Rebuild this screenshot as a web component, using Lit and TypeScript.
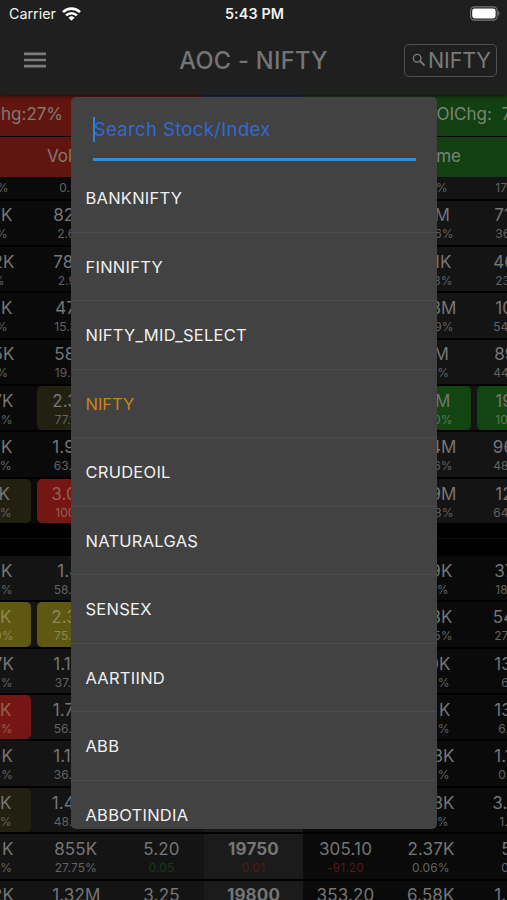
import { LitElement, html, css, svg } from "lit";
import { customElement, property } from "lit/decorators.js";
import { classMap } from "lit/directives/class-map.js";
import { styleMap } from "lit/directives/style-map.js";

type Tone = "" | "olive" | "yellow" | "red" | "green";

/** One edge cell: main text, its x, sub text, its x, and an optional highlight. */
type Edge = [string, number, string, number, Tone?];

interface Row {
  clip?: boolean;
  left: Edge;
  vol: Edge;
  mid?: { call: string; callChg: string; strike: string; strikeChg: string; put: string; putChg: string };
  putVol: Edge;
  right: Edge;
}

const UPPER: Row[] = [
  { clip: true, left: ["", 0, "%", 8], vol: ["", 0, "0.9%", 60], putVol: ["", 0, "%", 447], right: ["", 0, "17", 496] },
  { left: ["K", 12, "%", 7], vol: ["82K", 54, "2.6%", 58], putVol: ["M", 449.5, "6%", 453], right: ["71K", 495, "36", 496] },
  { left: ["2K", 14, "%", 4], vol: ["78K", 54, "2.9%", 58.5], putVol: ["1K", 451, "3%", 452], right: ["46K", 494, "23", 496] },
  { left: ["K", 12, "%", 7], vol: ["47K", 56, "15.3%", 55], putVol: ["3M", 456, "9%", 453], right: ["10M", 496, "54", 494] },
  { left: ["5K", 14, "%", 7.5], vol: ["58K", 55, "19.2%", 55.5], putVol: ["M", 448.5, "%", 448.5], right: ["89K", 495, "44", 494] },
  { left: ["7K", 13, "%", 12], vol: ["2.3M", 53, "77.1%", 55.5, "olive"], putVol: ["M", 450, "0%", 452, "green"], right: ["19M", 496, "10", 496, "green"] },
  { left: ["K", 12, "%", 11], vol: ["1.9M", 53, "63.4%", 54.5], putVol: ["4M", 456, "6%", 452], right: ["96K", 493.5, "48", 494] },
  { left: ["K", 9.5, "%", 11, "olive"], vol: ["3.0M", 52, "100%", 56, "red"], putVol: ["9M", 456, "8%", 453], right: ["12M", 496, "64", 494] },
];

const LOWER: Row[] = [
  { left: ["K", 12, "%", 12], vol: ["1.4M", 58, "58.3%", 54.5], putVol: ["9K", 452, "%", 448], right: ["37K", 495, "18", 496] },
  { left: ["K", 11, "9%", 13, "yellow"], vol: ["2.3M", 52, "75.6%", 55, "yellow"], putVol: ["3K", 452, "5%", 452], right: ["54K", 493.5, "27", 495] },
  { left: ["7K", 13.5, "%", 12], vol: ["1.1M", 54, "37.2%", 55.5], putVol: ["0K", 450, "%", 449], right: ["13K", 495, "6", 502] },
  { left: ["K", 11, "%", 12, "red"], vol: ["1.7M", 53.5, "56.4%", 54.5], putVol: ["K", 450, "%", 449], right: ["13K", 495, "6.", 499] },
  { left: ["K", 12.5, "4%", 12.5], vol: ["1.1M", 54, "36.8%", 54.5], putVol: ["3K", 454, "%", 449], right: ["1.1K", 495, "0.", 499] },
  { left: ["K", 11, "%", 11, "olive"], vol: ["1.4M", 52.5, "48.1%", 54.5], putVol: ["3K", 454, "%", 448], right: ["3.2K", 493, "1.", 500] },
  {
    left: ["K", 13, "7%", 11.5], vol: ["855K", 55, "27.75%", 55.5],
    mid: { call: "5.20", callChg: "0.05", strike: "19750", strikeChg: "0.01", put: "305.10", putChg: "-91.20" },
    putVol: ["2.37K", 454, "0.06%", 449], right: ["5", 502, "0", 502],
  },
  {
    left: ["2K", 13.5, "", 0], vol: ["1.32M", 53, "", 55],
    mid: { call: "3.25", callChg: "", strike: "19800", strikeChg: "", put: "353.20", putChg: "" },
    putVol: ["6.58K", 454, "", 449], right: ["1.2K", 495, "", 499],
  },
];

const SYMBOLS = ["BANKNIFTY", "FINNIFTY", "NIFTY_MID_SELECT", "NIFTY", "CRUDEOIL", "NATURALGAS", "SENSEX", "AARTIIND", "ABB", "ABBOTINDIA"];

@customElement("status-bar")
class StatusBar extends LitElement {
  static styles = css`
    :host { display: grid; grid-template-columns: 1fr auto 1fr; align-items: center; height: 27px; padding: 0 7px 0 9px; color: #f2f2f2; font-size: 14.3px; }
    .carrier { display: flex; align-items: center; gap: 6px; }
    .time { font-weight: 600; font-size: 14.3px; letter-spacing: 0.15px; }
    .battery { justify-self: end; }
    svg { display: block; }
  `;
  render() {
    return html`
      <div class="carrier">
        <span>Carrier</span>
        <svg width="19" height="14" viewBox="0 0 19 14">
          ${svg`<g fill="none" stroke="#fff" stroke-width="2.7"><path d="M1 5.1a12.2 12.2 0 0 1 17 0"/><path d="M4.1 8.4a7.8 7.8 0 0 1 10.8 0"/></g>
          <path d="M9.5 13.8 6.5 10.8a4.3 4.3 0 0 1 6 0z" fill="#fff"/>`}
        </svg>
      </div>
      <span class="time">5:43 PM</span>
      <svg class="battery" width="30" height="15" viewBox="0 0 30 15">
        <rect x="0.6" y="0.9" width="26.6" height="13.2" rx="3.8" fill="none" stroke="#777" stroke-width="1.1" />
        <rect x="2.2" y="2.5" width="23.4" height="10" rx="2.4" fill="#fff" />
        <path d="M28.3 5.1c1.5.6 1.5 4.2 0 4.8z" fill="#777" />
      </svg>
    `;
  }
}

@customElement("app-bar")
class AppBar extends LitElement {
  static styles = css`
    :host { display: grid; grid-template-columns: 1fr auto 1fr; align-items: center; height: 67px; padding: 0 10px; color: #7a7a7a; box-sizing: border-box; }
    .menu { margin: -1px 0 0 14px; }
    .title { font-size: 23.6px; font-weight: 500; letter-spacing: 0.3px; margin-top: -1px; color: #747474; }
    .picker { justify-self: end; display: flex; align-items: center; box-sizing: border-box; width: 93px; height: 33px; padding-left: 7px; border: 1px solid #505050; border-radius: 5px; font-size: 21.5px; letter-spacing: -0.15px; margin-top: -1px; gap: 2px; }
    svg { display: block; flex: none; margin-top: -1px; }
  `;
  render() {
    return html`
      <svg class="menu" width="22" height="16" viewBox="0 0 22 16">
        <path d="M0 1.9h22M0 8h22M0 14.1h22" stroke="#7c7c7c" stroke-width="2.6" />
      </svg>
      <div class="title">AOC - NIFTY</div>
      <div class="picker">
        <svg width="14" height="14" viewBox="0 0 14 14">
          <circle cx="5.2" cy="5.2" r="3.8" fill="none" stroke="#7a7a7a" stroke-width="1.4" />
          <path d="M8 8l4.6 4.6" stroke="#7a7a7a" stroke-width="1.8" />
        </svg>
        <span>NIFTY</span>
      </div>
    `;
  }
}

@customElement("option-chain")
class OptionChain extends LitElement {
  static styles = css`
    :host { display: block; overflow: hidden; background: #000; color: #757575; }
    .row, .head { display: grid; grid-template-columns: 34px 85px 85px 99px 85px 86px 85px; }
    .head { height: 41px; line-height: 39px; font-size: 17px; color: #84786f; white-space: pre; }
    .head.second { height: 41.5px; border-top: 1px solid #0006; box-sizing: border-box; line-height: 39px; }
    .calls { grid-column: span 3; background: #601511; }
    .puts { grid-column: span 3; background: #124012; color: #798572; }
    .strike-head { background: #0d2f50; }
    .h1 { padding-left: 1px; }
    .h2 { padding-left: 47px; }
    .p1 { padding-left: 133.5px; display: flex; gap: 10px; }
    .p2 { width: 158px; text-align: right; }
    .row { height: 46.4px; }
    .row.clip { height: 23.5px; align-content: end; overflow: hidden; }
    .cell { display: flex; flex-direction: column; box-sizing: border-box; height: 46.4px; padding-top: 1.8px; border-bottom: 2.5px solid #000; white-space: nowrap; position: relative; z-index: 0; }
    .itm { background: #141414; }
    .otm { background: #0a0a0a; }
    .strike { background: #1b1b1b; font-weight: 700; }
    .main { height: 25px; line-height: 27px; font-size: 17px; letter-spacing: 0.15px; }
    .sub { height: 16px; line-height: 14px; font-size: 12px; color: #626262; letter-spacing: 0.1px; font-weight: 400; }
    .center { text-align: center; }
    .end .main, .end .sub { display: flex; justify-content: flex-end; }
    .pill::before { content: ""; position: absolute; z-index: -1; inset: 0 3px; border-radius: 5px; background: var(--pill); }
    .first::before { left: 0; border-radius: 0 5px 5px 0; }
    .olive { --pill: #222010; }
    .yellow { --pill: #5e5813; }
    .yellow .main, .yellow .sub { color: #8d874f; }
    .red { --pill: #751614; }
    .red .main, .red .sub { color: #93604f; }
    .green { --pill: #124512; }
    .green .sub { color: #5c7a52; }
    .up { color: #153a17; }
    .down { color: #501a18; }
    .gap { height: 30.7px; box-sizing: border-box; padding-top: 12.5px; }
    .rule { height: 1px; background: #111; }
  `;

  private edge([main, mx, sub, sx, tone]: Edge, shade: string, from: number, to: number, alignEnd: boolean) {
    const pad = (x: number) =>
      alignEnd ? { "padding-right": `${to - x - 0.6}px` } : { "padding-left": `${x - from - 0.8}px` };
    const classes = { cell: true, [shade]: true, end: alignEnd, pill: !!tone, first: from === 0, [tone || "plain"]: true };
    return html`<div class=${classMap(classes)}>
      <div class="main" style=${styleMap(pad(mx))}>${main}</div>
      <div class="sub" style=${styleMap(pad(sx))}>${sub}</div>
    </div>`;
  }

  private row(r: Row, callShade: string, putShade: string) {
    const m = r.mid;
    const mid = (main: string, sub: string, shade: string, tone: string) => html`<div class="cell center ${shade}">
      <div class="main">${main}</div><div class="sub ${tone}">${sub}</div>
    </div>`;
    return html`<div class="row ${r.clip ? "clip" : ""}">
      ${this.edge(r.left, callShade, 0, 34, true)}
      ${this.edge(r.vol, callShade, 34, 119, false)}
      ${mid(m?.call ?? "", m?.callChg ?? "", callShade, "up")}
      ${mid(m?.strike ?? "", m?.strikeChg ?? "", "strike", "down")}
      ${mid(m?.put ?? "", m?.putChg ?? "", putShade, "down")}
      ${this.edge(r.putVol, putShade, 388, 474, true)}
      ${this.edge(r.right, putShade, 474, 559, false)}
    </div>`;
  }

  render() {
    return html`
      <div class="head"><div class="calls h1">hg:27%</div><div class="strike-head"></div><div class="puts p1"><span>OIChg:</span><span>7%</span></div></div>
      <div class="head second"><div class="calls h2">Volume</div><div class="strike-head"></div><div class="puts"><div class="p2">Volume</div></div></div>
      ${UPPER.map((r) => this.row(r, "otm", "itm"))}
      <div class="gap"><div class="rule"></div></div>
      ${LOWER.map((r) => this.row(r, "itm", "otm"))}
    `;
  }
}

@customElement("symbol-dialog")
class SymbolDialog extends LitElement {
  @property() selected = "NIFTY";
  static styles = css`
    :host { display: flex; flex-direction: column; box-sizing: border-box; background: #424242; border-radius: 5px; overflow: hidden; color: #f0f0f0; }
    .search { display: flex; align-items: center; flex: none; box-sizing: border-box; height: 64.5px; margin: 0 21.5px 3px 22px; padding: 16px 0 12px; border-bottom: 3px solid #318fd2; }
    .caret { width: 2.3px; height: 25.5px; background: #2a86dd; flex: none; margin-right: -1.2px; }
    .hint { color: #3369cf; font-size: 18.5px; letter-spacing: 0.36px; white-space: nowrap; }
    .item { flex: none; box-sizing: border-box; height: 68.52px; line-height: 69px; padding-left: 14.8px; font-size: 16.5px; letter-spacing: 0.25px; border-bottom: 1.5px solid #4c4c4c; }
    .selected { color: #cc850f; letter-spacing: 0; }
  `;
  render() {
    return html`
      <div class="search"><span class="caret"></span><span class="hint">Search Stock/Index</span></div>
      ${SYMBOLS.map((s) => html`<div class=${classMap({ item: true, selected: s === this.selected })}>${s}</div>`)}
    `;
  }
}

@customElement("app-root")
class AppRoot extends LitElement {
  static styles = css`
    :host { display: block; position: relative; width: 507px; height: 900px; overflow: hidden; background: #000; font-family: Inter, Roboto, "Liberation Sans", sans-serif; }
    .top { background: #1f1f1f; height: 94.5px; box-shadow: 0 1px 4px #000a; position: relative; }
    symbol-dialog { position: absolute; left: 70.7px; top: 96.5px; width: 366.5px; height: 732.5px; }
  `;
  render() {
    return html`
      <div class="top"><status-bar></status-bar><app-bar></app-bar></div>
      <option-chain></option-chain>
      <symbol-dialog></symbol-dialog>
    `;
  }
}
